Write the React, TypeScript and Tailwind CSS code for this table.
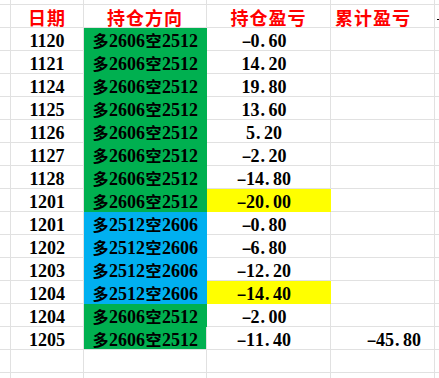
type Row = {
  date: string;
  dir: string;
  dirColor: 'green' | 'blue';
  pnl: string;
  hot?: boolean;
  total?: string;
};

const rows: Row[] = [
  { date: '1120', dir: '多2606空2512', dirColor: 'green', pnl: '-0.60' },
  { date: '1121', dir: '多2606空2512', dirColor: 'green', pnl: '14.20' },
  { date: '1124', dir: '多2606空2512', dirColor: 'green', pnl: '19.80' },
  { date: '1125', dir: '多2606空2512', dirColor: 'green', pnl: '13.60' },
  { date: '1126', dir: '多2606空2512', dirColor: 'green', pnl: '5.20' },
  { date: '1127', dir: '多2606空2512', dirColor: 'green', pnl: '-2.20' },
  { date: '1128', dir: '多2606空2512', dirColor: 'green', pnl: '-14.80' },
  { date: '1201', dir: '多2606空2512', dirColor: 'green', pnl: '-20.00', hot: true },
  { date: '1201', dir: '多2512空2606', dirColor: 'blue', pnl: '-0.80' },
  { date: '1202', dir: '多2512空2606', dirColor: 'blue', pnl: '-6.80' },
  { date: '1203', dir: '多2512空2606', dirColor: 'blue', pnl: '-12.20' },
  { date: '1204', dir: '多2512空2606', dirColor: 'blue', pnl: '-14.40', hot: true },
  { date: '1204', dir: '多2606空2512', dirColor: 'green', pnl: '-2.00' },
  { date: '1205', dir: '多2606空2512', dirColor: 'green', pnl: '-11.40', total: '-45.80' },
];

const line = 'border-[#e1e1e1]';
const head = "text-[18px] leading-[20px] font-bold text-[#ff0000] font-['Noto_Sans_CJK_SC',sans-serif] tracking-[1px]";
const serif = "font-['Liberation_Serif',serif] font-bold text-[18px] leading-[20px] text-black";
const cjk = "font-['Noto_Sans_CJK_SC',sans-serif] font-bold text-[16px] leading-[20px]";

// fixed-pitch text like the sheet's SimSun: half-width cells of 9px, CJK cells of 17px
const Cells = ({ text }: { text: string }) => (
  <span className={`whitespace-nowrap ${serif}`}>
    {Array.from(text).map((c, i) => {
      if (/[\u4e00-\u9fff]/.test(c))
        return (
          <span key={i} className={`inline-block w-[17px] text-center ${cjk}`}>{c}</span>
        );
      if (c === '-')
        return (
          <span key={i} className="inline-block w-[9px] text-center scale-x-[1.7]">{c}</span>
        );
      return (
        <span key={i} className={`inline-block w-[9px] ${c === '.' ? 'text-left pl-[1px]' : 'text-center'}`}>
          {c}
        </span>
      );
    })}
  </span>
);

const Blank = ({ h }: { h: string }) => (
  <div className={`flex ${h}`}>
    <div className={`w-[11px] border-r border-b ${line}`} />
    <div className={`w-[73px] border-r border-b ${line}`} />
    <div className={`w-[123px] border-r border-b ${line}`} />
    <div className={`w-[124px] border-r border-b ${line}`} />
    <div className={`w-[104px] border-r border-b ${line}`} />
    <div className={`flex-1 border-b ${line}`} />
  </div>
);

export default function App() {
  return (
    <div className="w-[439px] h-[378px] overflow-hidden bg-white">
      <Blank h="h-[5px]" />

      {/* header */}
      <div className="flex h-[23px]">
        <div className={`w-[11px] border-r border-b ${line}`} />
        <div className={`w-[73px] border-r border-b ${line} flex items-center justify-center pt-[2px] ${head}`}>日期</div>
        <div className={`w-[123px] border-r border-b ${line} flex items-center justify-center pt-[2px] ${head}`}>持仓方向</div>
        <div className={`w-[124px] border-r border-b ${line} flex items-center justify-center pt-[2px] ${head}`}>持仓盈亏</div>
        <div className={`w-[104px] border-r border-b ${line} flex items-center pl-[4px] pt-[2px] ${head}`}>累计盈亏</div>
        <div className={`flex-1 border-b ${line} flex items-center pl-[2px] pt-[6px]`}>
          <div className="w-[2px] h-px bg-black" />
        </div>
      </div>

      {rows.map((r, i) => {
        const last = i === rows.length - 1;
        const dirBg = r.dirColor === 'green' ? 'bg-[#00b050]' : 'bg-[#00b0f0]';
        const dirBorder = last ? line : r.dirColor === 'green' ? 'border-[#00b050]' : 'border-[#00b0f0]';
        return (
          <div key={i} className="flex h-[23px]">
            <div className={`w-[11px] border-r border-b ${line}`} />
            <div className={`w-[73px] border-r border-b ${line} flex items-center justify-center pt-[3px] ${serif}`}>
              {r.date}
            </div>
            <div className={`w-[123px] border-r border-b ${dirBorder} ${dirBg} flex items-center justify-center pt-[3px]`}>
              <Cells text={r.dir} />
            </div>
            <div
              className={`w-[124px] border-r border-b flex items-center justify-center pt-[3px] pr-[9px] ${
                r.hot ? 'bg-[#ffff00] border-[#ffff00]' : line
              }`}
            >
              <Cells text={r.pnl} />
            </div>
            <div className={`w-[104px] border-r border-b ${line} flex items-center justify-end pt-[3px] pr-[13px]`}>
              {r.total && <Cells text={r.total} />}
            </div>
            <div className={`flex-1 border-b ${line}`} />
          </div>
        );
      })}

      <Blank h="h-[23px]" />
      <Blank h="h-[23px]" />
    </div>
  );
}
